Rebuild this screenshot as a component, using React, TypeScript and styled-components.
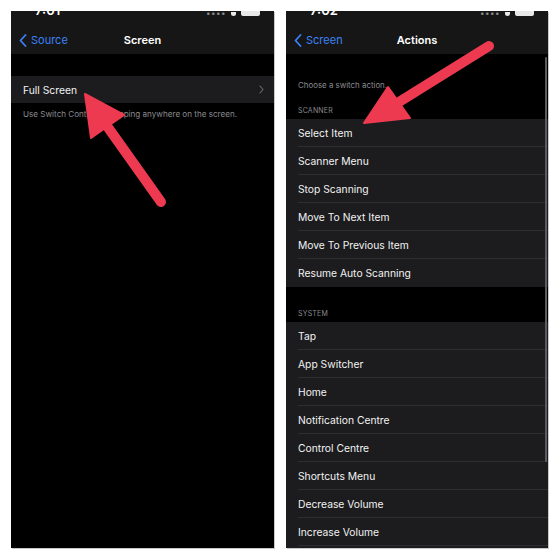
import React from "react";
import styled, { createGlobalStyle } from "styled-components";

const Global = createGlobalStyle`
  html, body { margin: 0; padding: 0; background: #ffffff; }
  body { font-family: Inter, "Liberation Sans", Arial, sans-serif; -webkit-font-smoothing: antialiased; }
`;

const Page = styled.div`
  position: relative;
  width: 560px;
  height: 560px;
  box-sizing: border-box;
  padding: 11px 12px 12px 11px;
  display: flex;
  gap: 12px;
  background: #fff;
`;

const Phone = styled.div<{ $w: number }>`
  position: relative;
  width: ${(p) => p.$w}px;
  height: 537px;
  background: #000;
  overflow: hidden;
  display: flex;
  flex-direction: column;
  box-shadow: 1px 1px 0 #c8c8c8;
`;

const Header = styled.div`
  background: #161616;
  height: 43px;
  display: flex;
  flex-direction: column;
  flex-shrink: 0;
`;

const StatusBar = styled.div`
  height: 5px;
  overflow: hidden;
  display: flex;
  justify-content: space-between;
  align-items: flex-end;
  padding: 0 14px 0 24px;
`;

const Time = styled.span`
  color: #fff;
  font-size: 13px;
  font-weight: 600;
  line-height: 13px;
  margin-bottom: -1px;
`;

const StatusIcons = styled.div`
  display: flex;
  align-items: flex-end;
  gap: 5px;
`;

const Dots = styled.span`
  color: #8a8a8a;
  font-size: 8px;
  letter-spacing: 0.5px;
  line-height: 6px;
`;

const Battery = styled.span`
  width: 19px;
  height: 8px;
  background: #e8e8e8;
  border-radius: 2px;
`;

const Wifi = styled.span`
  width: 5px;
  height: 4px;
  background: #e8e8e8;
  border-radius: 0 0 3px 3px;
`;

const NavBar = styled.div`
  position: relative;
  flex: 1;
  padding-top: 10px;
  display: flex;
  align-items: center;
  justify-content: center;
`;

const Back = styled.div`
  position: absolute;
  left: 8px;
  top: 10px;
  bottom: 0;
  display: flex;
  align-items: center;
  gap: 4px;
  color: #3b82f6;
  font-size: 11px;
`;

const Title = styled.div`
  color: #fff;
  font-size: 11px;
  font-weight: 600;
`;

const Body = styled.div<{ $top: number }>`
  flex: 1;
  padding-top: ${(p) => p.$top}px;
  display: flex;
  flex-direction: column;
`;

const Group = styled.div`
  background: #1c1c1e;
  display: flex;
  flex-direction: column;
`;

const Row = styled.div<{ $h: number }>`
  height: ${(p) => p.$h}px;
  padding-left: 12px;
  display: flex;
  align-items: center;
  flex-shrink: 0;
`;

const RowInner = styled.div<{ $sep: boolean }>`
  flex: 1;
  height: 100%;
  display: flex;
  align-items: center;
  justify-content: space-between;
  padding-right: 10px;
  color: #f2f2f2;
  font-size: 10.3px;
  box-shadow: ${(p) => (p.$sep ? "inset 0 -1px 0 #2e2e31" : "none")};
`;

const Chevron = styled.span`
  display: flex;
  color: #6b6b70;
`;

const Footer = styled.div`
  color: #8b8b90;
  font-size: 8.1px;
  padding: 6px 12px 0;
`;

const Caption = styled.div<{ $h: number }>`
  height: ${(p) => p.$h}px;
  color: #8b8b90;
  font-size: 7.9px;
  padding: 0 12px 4px;
  display: flex;
  align-items: flex-end;
  box-sizing: border-box;
  flex-shrink: 0;
`;

const Section = styled(Caption)`
  font-size: 7px;
  letter-spacing: 0.2px;
  text-transform: uppercase;
`;

const Scrollbar = styled.div`
  position: absolute;
  right: 1px;
  top: 46px;
  width: 2.5px;
  height: 405px;
  border-radius: 2px;
  background: #5c5c60;
`;

const Overlay = styled.svg`
  position: absolute;
  inset: 0;
  pointer-events: none;
`;

const BackChevron = () => (
  <svg width="8" height="13" viewBox="0 0 8 13">
    <path d="M6.5 1 L1.5 6.5 L6.5 12" fill="none" stroke="#3b82f6" strokeWidth="1.8" strokeLinecap="round" strokeLinejoin="round" />
  </svg>
);

const ChevronRight = () => (
  <svg width="5" height="9" viewBox="0 0 5 9">
    <path d="M1 1 L4 4.5 L1 8" fill="none" stroke="#6b6b70" strokeWidth="1.1" strokeLinecap="round" strokeLinejoin="round" />
  </svg>
);

const Status = ({ time }: { time: string }) => (
  <StatusBar>
    <Time>{time}</Time>
    <StatusIcons>
      <Dots>••••</Dots>
      <Wifi />
      <Battery />
    </StatusIcons>
  </StatusBar>
);

const Nav = ({ back, title, time }: { back: string; title: string; time: string }) => (
  <Header>
    <Status time={time} />
    <NavBar>
      <Back>
        <BackChevron />
        {back}
      </Back>
      <Title>{title}</Title>
    </NavBar>
  </Header>
);

const scanner = [
  "Select Item",
  "Scanner Menu",
  "Stop Scanning",
  "Move To Next Item",
  "Move To Previous Item",
  "Resume Auto Scanning",
];

const system = [
  "Tap",
  "App Switcher",
  "Home",
  "Notification Centre",
  "Control Centre",
  "Shortcuts Menu",
  "Decrease Volume",
  "Increase Volume",
  "Restart Scanning",
];

const List = ({ items }: { items: string[] }) => (
  <Group>
    {items.map((t, i) => (
      <Row key={t} $h={28}>
        <RowInner $sep={i < items.length - 1}>{t}</RowInner>
      </Row>
    ))}
  </Group>
);

export default function App() {
  return (
    <>
      <Global />
      <Page>
        <Phone $w={263}>
          <Nav back="Source" title="Screen" time="7:01" />
          <Body $top={22}>
            <Group>
              <Row $h={27}>
                <RowInner $sep={false}>
                  Full Screen
                  <Chevron>
                    <ChevronRight />
                  </Chevron>
                </RowInner>
              </Row>
            </Group>
            <Footer>Use Switch Control for tapping anywhere on the screen.</Footer>
          </Body>
        </Phone>
        <Phone $w={262}>
          <Nav back="Screen" title="Actions" time="7:02" />
          <Body $top={0}>
            <Caption $h={40}>Choose a switch action.</Caption>
            <Section $h={25}>Scanner</Section>
            <List items={scanner} />
            <Section $h={35}>System</Section>
            <List items={system} />
          </Body>
          <Scrollbar />
        </Phone>
        <Overlay width="560" height="560" viewBox="0 0 560 560">
          <g fill="#ee3a50" stroke="#ee3a50" strokeLinejoin="round">
            <line x1="107" y1="126" x2="161" y2="202" strokeWidth="10" strokeLinecap="round" />
            <polygon points="85,94 91,138 124,115" strokeWidth="2" />
            <line x1="399" y1="102" x2="489" y2="46" strokeWidth="10" strokeLinecap="round" />
            <polygon points="364,123 388,87 410,118" strokeWidth="2" />
          </g>
        </Overlay>
      </Page>
    </>
  );
}
